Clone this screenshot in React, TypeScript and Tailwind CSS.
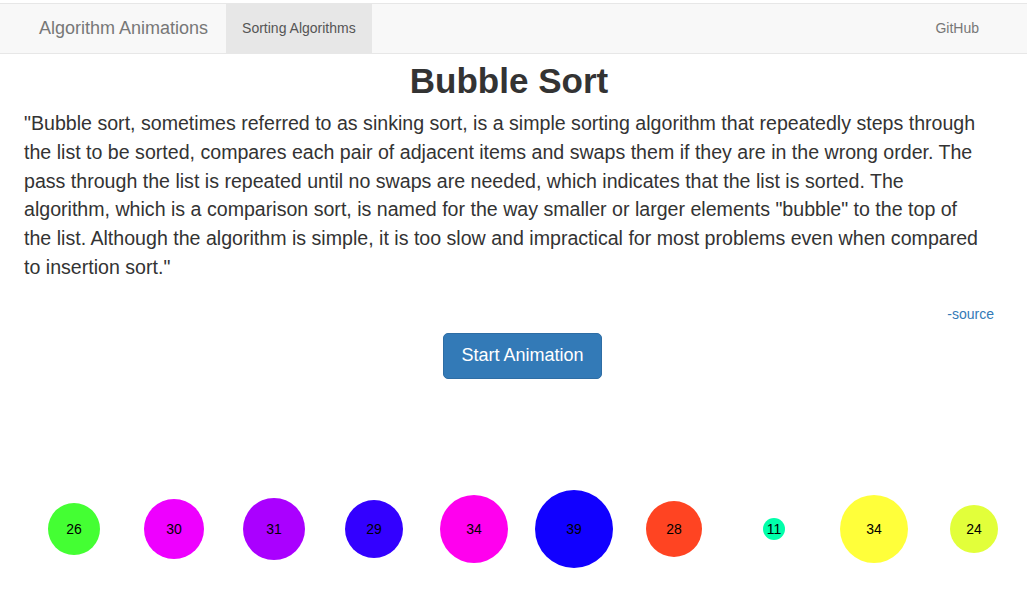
const BUBBLES = [
  { value: 26, color: "#44ff33" },
  { value: 30, color: "#ee00ff" },
  { value: 31, color: "#aa00ff" },
  { value: 29, color: "#3300ff" },
  { value: 34, color: "#ff00ee" },
  { value: 39, color: "#1100ff" },
  { value: 28, color: "#ff4422" },
  { value: 11, color: "#00ffaa" },
  { value: 34, color: "#ffff3a" },
  { value: 24, color: "#e2ff3a" },
];

// wrapped the way the original page wraps it
const DESCRIPTION_LINES = [
  '"Bubble sort, sometimes referred to as sinking sort, is a simple sorting algorithm that repeatedly steps through',
  "the list to be sorted, compares each pair of adjacent items and swaps them if they are in the wrong order. The",
  "pass through the list is repeated until no swaps are needed, which indicates that the list is sorted. The",
  'algorithm, which is a comparison sort, is named for the way smaller or larger elements "bubble" to the top of',
  "the list. Although the algorithm is simple, it is too slow and impractical for most problems even when compared",
  'to insertion sort."',
];

const Navbar = () => (
  <nav className="mt-[3px] flex h-[51px] items-stretch border-y border-[#e7e7e7] bg-[#f8f8f8]">
    <a className="flex items-center pl-[39px] pr-[18px] text-[18px] text-[#777]">
      Algorithm Animations
    </a>
    <a className="flex items-center bg-[#e7e7e7] px-[16px] text-[14px] text-[#555]">
      Sorting Algorithms
    </a>
    <div className="flex-1" />
    <a className="flex items-center pl-[15px] pr-[48px] text-[14px] text-[#777]">
      GitHub
    </a>
  </nav>
);

const BubbleChart = () => (
  <svg width="1027" height="110" className="block">
    {BUBBLES.map((bubble, i) => {
      const cx = 74 + i * 100;
      return (
        <g key={i}>
          <circle cx={cx} cy={55} r={bubble.value} fill={bubble.color} />
          <text
            x={cx}
            y={60}
            textAnchor="middle"
            fontSize="14"
            fontFamily="'Liberation Sans', Arial, sans-serif"
            fill="#000"
          >
            {bubble.value}
          </text>
        </g>
      );
    })}
  </svg>
);

export default function App() {
  return (
    <div className="min-h-[603px] bg-white font-['Liberation_Sans',Arial,sans-serif] text-[#333]">
      <Navbar />
      <h1 className="mt-[7px] pr-[9px] text-center text-[35px] font-bold leading-[40px]">
        Bubble Sort
      </h1>
      <p className="mt-[8px] px-6 text-[19.6px] font-light leading-[28.8px]">
        {DESCRIPTION_LINES.map((line, i) => (
          <span key={i} className="block whitespace-nowrap">
            {line}
          </span>
        ))}
      </p>
      <div className="mt-[22px] flex justify-end pr-[33px]">
        <a className="text-[14px] leading-[20px] text-[#337ab7]">-source</a>
      </div>
      <div className="mt-[9px] flex justify-center pl-[18px]">
        <button
          type="button"
          className="h-[46px] w-[159px] rounded-[5px] border border-[#2e6da4] bg-[#337ab7] text-[18px] text-white"
        >
          Start Animation
        </button>
      </div>
      <div className="mt-[95px]">
        <BubbleChart />
      </div>
    </div>
  );
}
